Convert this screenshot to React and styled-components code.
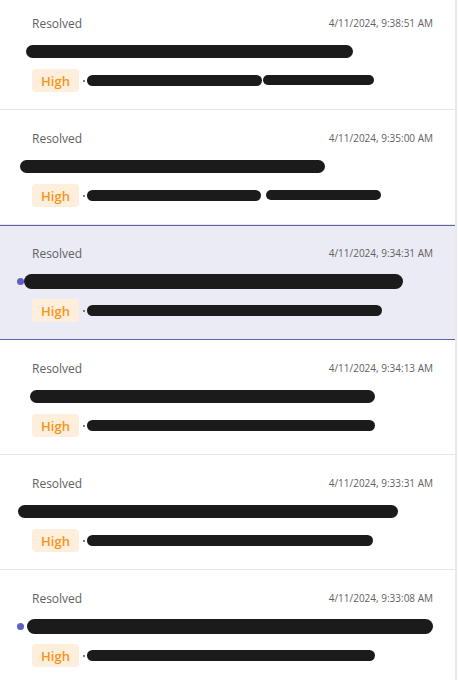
import styled, { createGlobalStyle, css } from 'styled-components';

const GlobalStyle = createGlobalStyle`
  html, body {
    margin: 0;
    padding: 0;
    background: #ffffff;
    font-family: 'Open Sans', 'Noto Sans', sans-serif;
  }
`;

const Pane = styled.div`
  width: 455px;
  height: 680px;
  overflow: hidden;
  border-right: 2px solid #e9e9e9;
  background: #ffffff;
`;

const List = styled.ul`
  list-style: none;
  margin: 0;
  padding: 0;
`;

// carte d'une notification
const Card = styled.li`
  position: relative;
  height: 115px;
  box-sizing: border-box;
  padding: 20px 22px 0 0;
  border-bottom: 1px solid #e6e6e6;
  display: flex;
  flex-direction: column;

  &:first-child {
    height: 110px;
    padding-top: 15px;
  }

  ${(p) =>
    p.$selected &&
    css`
      background: #ebebf5;
      border-top: 1px solid #6264a7;
      border-bottom: 1px solid #6264a7;
      padding-top: 19px;
    `}
`;

const Header = styled.div`
  display: flex;
  justify-content: space-between;
  align-items: center;
  height: 16px;
  padding-left: 32px;
`;

const Status = styled.span`
  font-size: 12px;
  color: #616161;
`;

const Time = styled.span`
  font-size: 10px;
  color: #616161;
`;

const TitleRow = styled.div`
  position: relative;
  display: flex;
  align-items: center;
  height: 20px;
  margin-top: 10px;
`;

const UnreadDot = styled.span`
  position: absolute;
  left: 17px;
  top: 50%;
  width: 7px;
  height: 7px;
  margin-top: -3px;
  border-radius: 50%;
  background: #5b5fc7;
`;

// bande noire qui masque le texte
const Redaction = styled.span`
  display: block;
  flex: none;
  height: ${(p) => p.$h || 13}px;
  width: ${(p) => p.$w}px;
  margin-left: ${(p) => p.$x || 0}px;
  margin-top: ${(p) => p.$y || 0}px;
  background: #1b1b1b;
  border-radius: 8px;
`;

const MetaRow = styled.div`
  display: flex;
  align-items: center;
  height: 23px;
  margin-top: 8px;
  padding-left: 32px;
`;

const Badge = styled.span`
  display: inline-flex;
  align-items: center;
  justify-content: center;
  width: 47px;
  height: 23px;
  border-radius: 4px;
  background: #fdefdc;
  color: #f7941d;
  font-size: 13px;
  font-weight: 600;
`;

const Sep = styled.span`
  width: 2px;
  height: 2px;
  margin: 0 2px 0 4px;
  border-radius: 50%;
  background: #555;
`;

const items = [
  { time: '4/11/2024, 9:38:51 AM', title: [26, 327], meta: [[175], [111, 1]], unread: false },
  { time: '4/11/2024, 9:35:00 AM', title: [20, 305], meta: [[174], [115, 5]], unread: false },
  { time: '4/11/2024, 9:34:31 AM', title: [24, 379, 15], meta: [[295]], unread: true, selected: true },
  { time: '4/11/2024, 9:34:13 AM', title: [30, 345], meta: [[288]], unread: false },
  { time: '4/11/2024, 9:33:31 AM', title: [18, 380], meta: [[286]], unread: false },
  { time: '4/11/2024, 9:33:08 AM', title: [27, 406, 15], meta: [[288]], unread: true },
];

export default function App() {
  return (
    <>
      <GlobalStyle />
      <Pane>
        <List>
          {items.map((it) => (
            <Card key={it.time} $selected={it.selected}>
              <Header>
                <Status>Resolved</Status>
                <Time>{it.time}</Time>
              </Header>
              <TitleRow>
                {it.unread && <UnreadDot />}
                <Redaction $x={it.title[0]} $w={it.title[1]} $h={it.title[2] || 13} />
              </TitleRow>
              <MetaRow>
                <Badge>High</Badge>
                <Sep />
                {it.meta.map(([w, x], i) => (
                  <Redaction key={i} $w={w} $x={x || 0} $h={i === 0 ? 11 : 10} $y={i === 0 ? 0 : -2} />
                ))}
              </MetaRow>
            </Card>
          ))}
        </List>
      </Pane>
    </>
  );
}
